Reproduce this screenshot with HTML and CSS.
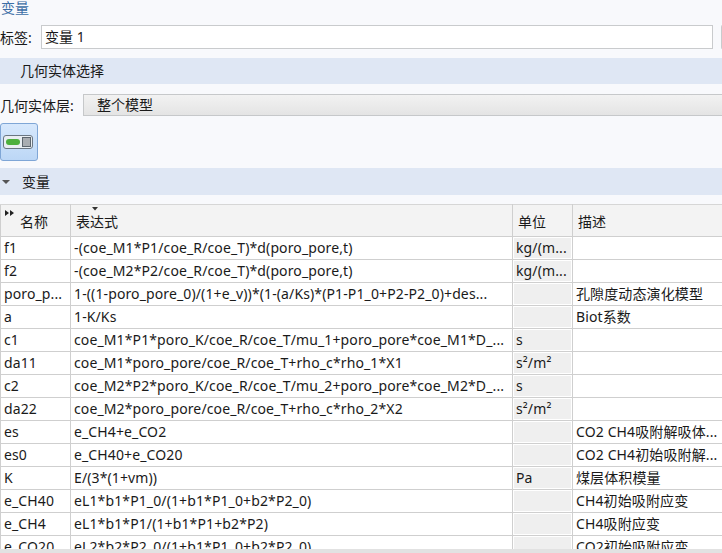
FILE: index.html
```html
<!DOCTYPE html>
<html lang="zh">
<head>
<meta charset="utf-8">
<link rel="stylesheet" href="styles.css">
</head>
<body>
<div class="page">
  <div class="title">变量</div>
  <div class="label-row">
    <span class="lbl">标签:</span>
    <div class="input">变量 1</div>
    <div class="side-btn"></div>
  </div>
  <div class="section">几何实体选择</div>
  <div class="geom-row">
    <span class="lbl">几何实体层:</span>
    <div class="select">整个模型</div>
  </div>
  <div class="tool-row">
    <div class="tool-btn">
      <svg width="30" height="14" viewBox="0 0 30 14">
        <rect x="0.5" y="0.5" width="29" height="13" rx="2.5" fill="#e9eef2" stroke="#6a7682"/>
        <rect x="3" y="4" width="14" height="6" rx="3" fill="#4caf3c"/>
        <rect x="19.5" y="2.5" width="8" height="9" fill="#a9adb1" stroke="#5d666e"/>
      </svg>
    </div>
  </div>
  <div class="section sec2"><span class="tri"></span>变量</div>
  <div class="table-wrap">
    <table class="grid">
      <colgroup>
        <col class="c-name"><col class="c-expr"><col class="c-unit"><col class="c-desc">
      </colgroup>
      <thead>
        <tr>
          <th class="h-name"><svg class="dbl" width="9" height="6" viewBox="0 0 9 6"><path d="M0 0L4 3L0 6Z M5 0L9 3L5 6Z" fill="#222"/></svg>名称</th>
          <th class="h-expr"><svg class="sort" width="6" height="4" viewBox="0 0 6 4"><path d="M0 0H6L3 3.5Z" fill="#333"/></svg>表达式</th>
          <th>单位</th>
          <th>描述</th>
        </tr>
      </thead>
      <tbody>
        <tr><td>f1</td><td>-(coe_M1*P1/coe_R/coe_T)*d(poro_pore,t)</td><td class="u">kg/(m...</td><td></td></tr>
        <tr><td>f2</td><td>-(coe_M2*P2/coe_R/coe_T)*d(poro_pore,t)</td><td class="u">kg/(m...</td><td></td></tr>
        <tr><td>poro_p...</td><td>1-((1-poro_pore_0)/(1+e_v))*(1-(a/Ks)*(P1-P1_0+P2-P2_0)+des...</td><td class="u"></td><td>孔隙度动态演化模型</td></tr>
        <tr><td>a</td><td>1-K/Ks</td><td class="u"></td><td>Biot系数</td></tr>
        <tr><td>c1</td><td>coe_M1*P1*poro_K/coe_R/coe_T/mu_1+poro_pore*coe_M1*D_...</td><td class="u">s</td><td></td></tr>
        <tr><td>da11</td><td>coe_M1*poro_pore/coe_R/coe_T+rho_c*rho_1*X1</td><td class="u">s²/m²</td><td></td></tr>
        <tr><td>c2</td><td>coe_M2*P2*poro_K/coe_R/coe_T/mu_2+poro_pore*coe_M2*D_...</td><td class="u">s</td><td></td></tr>
        <tr><td>da22</td><td>coe_M2*poro_pore/coe_R/coe_T+rho_c*rho_2*X2</td><td class="u">s²/m²</td><td></td></tr>
        <tr><td>es</td><td>e_CH4+e_CO2</td><td class="u"></td><td>CO2 CH4吸附解吸体...</td></tr>
        <tr><td>es0</td><td>e_CH40+e_CO20</td><td class="u"></td><td>CO2 CH4初始吸附解...</td></tr>
        <tr><td>K</td><td>E/(3*(1+vm))</td><td class="u">Pa</td><td>煤层体积模量</td></tr>
        <tr><td>e_CH40</td><td>eL1*b1*P1_0/(1+b1*P1_0+b2*P2_0)</td><td class="u"></td><td>CH4初始吸附应变</td></tr>
        <tr><td>e_CH4</td><td>eL1*b1*P1/(1+b1*P1+b2*P2)</td><td class="u"></td><td>CH4吸附应变</td></tr>
        <tr><td>e_CO20</td><td>eL2*b2*P2_0/(1+b1*P1_0+b2*P2_0)</td><td class="u"></td><td>CO2初始吸附应变</td></tr>
      </tbody>
    </table>
  </div>
  <div class="hscroll"></div>
</div>
</body>
</html>
```
FILE: styles.css
```css
html, body {
  margin: 0;
  padding: 0;
  background: #f8f9fc;
  overflow: hidden;
}
.page {
  width: 722px;
  height: 553px;
  overflow: hidden;
  font-family: "Noto Sans", "Noto Sans CJK SC", sans-serif;
  font-size: 14px;
  color: #1a1a1a;
  display: flex;
  flex-direction: column;
}
.page > * { flex: none; }
.title {
  height: 20px;
  font-size: 14px;
  line-height: 16px;
  color: #3c6ea6;
  padding-left: 1px;
}
.label-row {
  display: flex;
  align-items: center;
  height: 24px;
  margin-top: 5px;
  overflow: hidden;
}
.label-row > * { flex: none; }
.lbl { white-space: nowrap; }
.label-row .lbl { width: 41px; }
.input {
  width: 667px;
  height: 22px;
  border: 1px solid #c9cbcd;
  background: #fff;
  line-height: 22px;
  padding-left: 3px;
}
.side-btn {
  margin-left: 8px;
  width: 10px;
  height: 22px;
  border: 1px solid #c9cbcd;
  border-right: none;
  border-radius: 2px 0 0 2px;
  background: #f0f0f0;
}
.section {
  margin-top: 9px;
  height: 26px;
  background: #dfe7f4;
  line-height: 26px;
  padding-left: 20px;
}
.geom-row {
  display: flex;
  align-items: center;
  margin-top: 10px;
  height: 22px;
}
.geom-row .lbl { width: 83px; flex: none; }
.select {
  flex: 1;
  height: 20px;
  border: 1px solid #c6c8ca;
  border-right: none;
  background: linear-gradient(#f2f2f2, #e4e4e4);
  line-height: 20px;
  padding-left: 13px;
}
.tool-row {
  margin-top: 7px;
  height: 38px;
}
.tool-btn {
  width: 36px;
  height: 36px;
  border: 1px solid #7fa6d6;
  border-radius: 3px;
  background: linear-gradient(#d7e8fc, #bcd7f6);
  display: flex;
  align-items: center;
  justify-content: center;
}
.tool-btn svg { display: block; margin-left: -2px; }
.sec2 {
  margin-top: 7px;
  height: 27px;
  line-height: 27px;
  padding-left: 22px;
  position: relative;
}
.tri {
  position: absolute;
  left: 2px;
  top: 12px;
  width: 0;
  height: 0;
  border-left: 4px solid transparent;
  border-right: 4px solid transparent;
  border-top: 4px solid #555;
}
.table-wrap {
  margin-top: 9px;
  height: 345px;
  overflow: hidden;
}
.grid {
  border-collapse: collapse;
  table-layout: fixed;
  width: 760px;
}
.c-name { width: 70px; }
.c-expr { width: 442px; }
.c-unit { width: 60px; }
.c-desc { width: 188px; }
.grid th, .grid td {
  border: 1px solid #cfcfcf;
  white-space: nowrap;
  overflow: hidden;
  text-align: left;
  font-weight: normal;
  padding: 0 0 0 3px;
}
.grid th {
  height: 26px;
  background: #f3f3f3;
  vertical-align: bottom;
  padding-bottom: 5px;
  padding-left: 5px;
  position: relative;
  line-height: 18px;
}
.grid thead tr th { border-top: 1px solid #d6d6d6; }
.h-name { padding-left: 19px !important; }
.dbl {
  position: absolute;
  left: 4px;
  top: 5px;
}
.sort {
  position: absolute;
  left: 21px;
  top: 2px;
}
.grid td {
  height: 22px;
  background: #fff;
  line-height: 22px;
  letter-spacing: 0.12px;
}
.grid td.u {
  background: #efefef;
  box-shadow: inset 0 0 0 1px #fff;
}
.hscroll {
  height: 6px;
  background: #e2e2e2;
}
```
